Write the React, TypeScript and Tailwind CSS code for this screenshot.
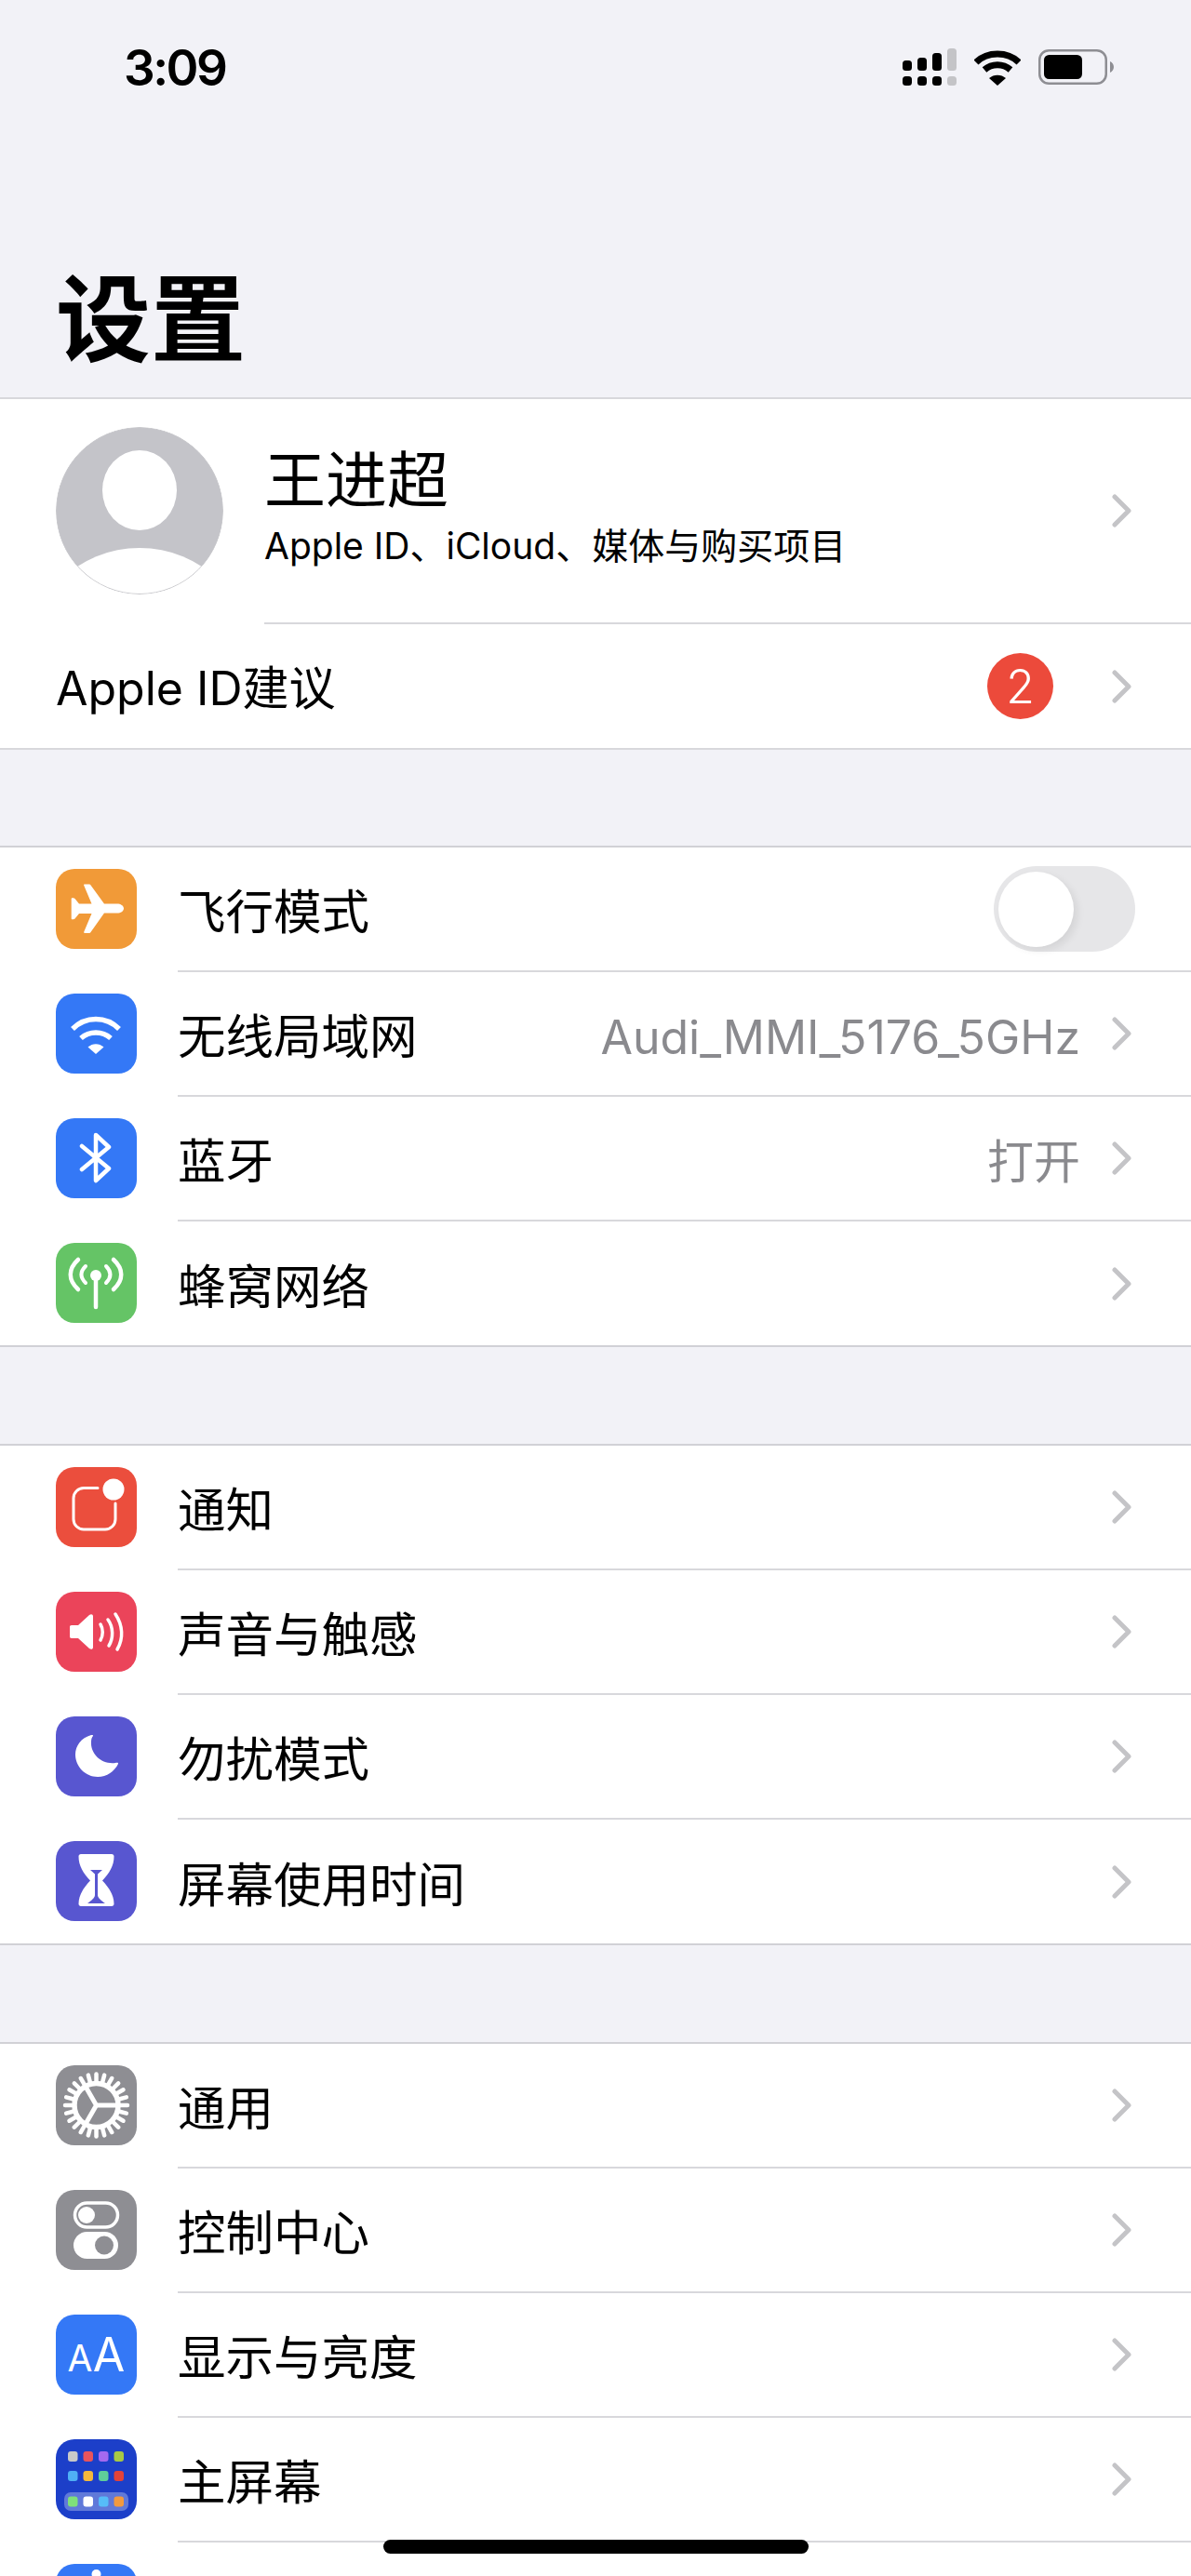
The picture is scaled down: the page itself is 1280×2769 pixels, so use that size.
import type { ReactNode } from "react";

const iconBox = "mb-[2px] flex h-[86px] w-[87px] shrink-0 items-center justify-center rounded-[20px]";

function Chevron() {
  return (
    <svg width="22" height="36" viewBox="0 0 22 36" fill="none" className="shrink-0">
      <path d="M3 3l15 15L3 33" stroke="#c4c4c7" strokeWidth="5" strokeLinecap="round" strokeLinejoin="round" />
    </svg>
  );
}

function Glyph({ children }: { children: ReactNode }) {
  return (
    <svg width="87" height="86" viewBox="0 0 87 86" fill="none">
      {children}
    </svg>
  );
}

const PlaneIcon = () => (
  <Glyph>
    <path
      d="M73 42.5c0-3-3.500-5-7-5H52L37.500 17.500c-.5-.8-1-1-2-1H31c-.8 0-1 .5-.8 1.200L38.500 37.500H25l-4.500-5.500c-.5-.5-1-.8-1.800-.8h-1c-.8 0-1 .5-1 1v21c0 .6.300 1 1 1h1c.8 0 1.300-.3 1.800-.8L25 48h13.500l-8.300 19.800c-.2.7 0 1.200.8 1.200h4.500c1 0 1.500-.2 2-1L52 47.500h14c3.500 0 7-2 7-5z"
      fill="#fff"
    />
  </Glyph>
);

const WifiIcon = () => (
  <Glyph>
    <path d="M18 38c14-14 36-14 50 0" stroke="#fff" strokeWidth="5.500" />
    <path d="M27 48c9-8 23-8 32 0" stroke="#fff" strokeWidth="5.500" />
    <path d="M34.500 57.500c5-4.500 12-4.500 17 0L43 65z" fill="#fff" />
  </Glyph>
);

const BluetoothIcon = () => (
  <Glyph>
    <path
      d="M28 30l29 24-14 13V18l14 13-29 24"
      stroke="#fff"
      strokeWidth="4.500"
      strokeLinecap="round"
      strokeLinejoin="round"
    />
  </Glyph>
);

const CellularIcon = () => (
  <Glyph>
    <circle cx="43" cy="35" r="6" fill="#fff" />
    <path d="M43 36v33" stroke="#fff" strokeWidth="4.500" strokeLinecap="round" />
    <path d="M32 25c-6 6-6 12 0 18M54 25c6 6 6 12 0 18" stroke="#fff" strokeWidth="4" strokeLinecap="round" />
    <path d="M24 18c-11 10-11 22 0 32M62 18c11 10 11 22 0 32" stroke="#fff" strokeWidth="4.500" strokeLinecap="round" />
  </Glyph>
);

const NotifyIcon = () => (
  <Glyph>
    <path
      d="M45 22.500H30a11 11 0 0 0-11 11V56a11 11 0 0 0 11 11h23a11 11 0 0 0 11-11V39"
      stroke="#fff"
      strokeWidth="3"
      strokeLinecap="round"
    />
    <circle cx="62" cy="24" r="11.500" fill="#fff" />
  </Glyph>
);

const SoundIcon = () => (
  <Glyph>
    <path
      d="M17 36h7l12-11c2-1.500 4-.8 4 1.500v33c0 2.300-2 3-4 1.500L24 50h-7c-1.500 0-2-.8-2-2V38c0-1.200.5-2 2-2z"
      fill="#fff"
    />
    <path d="M48 35c3 5 3 12 0 17" stroke="#fff" strokeWidth="3.500" strokeLinecap="round" />
    <path d="M56 30c6 8 6 20 1 28" stroke="#fff" strokeWidth="3.500" strokeLinecap="round" />
    <path d="M64 24c8 12 9 26 2 38" stroke="#fff" strokeWidth="3.500" strokeLinecap="round" />
  </Glyph>
);

const MoonIcon = () => (
  <Glyph>
    <path
      d="M38 20C27 23 21 32 21 41c0 13 11 24 24 24 10 0 18-6 22-14 .4-1-.5-1.500-3-1-14 2-27-9-26-23 0-3 1-5 2-6 .4-1-.8-1.300-2-1z"
      fill="#fff"
    />
  </Glyph>
);

const HourglassIcon = () => (
  <Glyph>
    <path
      d="M27 14h33c1.500 0 2.500 1 2.500 2.500 0 10-5 18-12.500 26 7.500 8 12.500 16 12.500 25 0 1.500-1 2.500-2.500 2.500H27c-1.500 0-2.500-1-2.500-2.500 0-9 5-17 12.500-25-7.500-8-12.500-16-12.500-26C24.500 15 25.500 14 27 14z"
      fill="#fff"
    />
    <path d="M37 31h13l-5 4.500V58c0 3 4 6 8 9H34c4-3 8-6 8-9V35.500z" fill="#5856d0" />
  </Glyph>
);

const GearIcon = () => (
  <Glyph>
    <circle cx="43.500" cy="43" r="23.500" stroke="#fff" strokeWidth="5.500" />
    {Array.from({ length: 24 }, (_, i) => {
      const a = (i * Math.PI) / 12;
      return (
        <line
          key={i}
          x1={43.5 + 24 * Math.cos(a)}
          y1={43 + 24 * Math.sin(a)}
          x2={43.5 + 33.5 * Math.cos(a)}
          y2={43 + 33.5 * Math.sin(a)}
          stroke="#fff"
          strokeWidth="4.500"
          strokeLinecap="round"
        />
      );
    })}
    <path d="M43.500 43H67M43.500 43L32 23M43.500 43L32 63" stroke="#fff" strokeWidth="5" />
  </Glyph>
);

const ControlIcon = () => (
  <Glyph>
    <rect x="20.500" y="14" width="46" height="26" rx="13" stroke="#fff" strokeWidth="3.500" />
    <circle cx="33" cy="27" r="9" fill="#fff" />
    <rect x="19" y="45" width="48" height="29" rx="14.500" fill="#fff" />
    <circle cx="52" cy="59.500" r="10" fill="#8e8e93" />
  </Glyph>
);

const DisplayIcon = () => (
  <Glyph>
    <text x="26" y="61" textAnchor="middle" fill="#fff" fontSize="39" fontFamily="Inter, sans-serif" fontWeight="400">
      A
    </text>
    <text x="57" y="61" textAnchor="middle" fill="#fff" fontSize="50" fontFamily="Inter, sans-serif" fontWeight="400">
      A
    </text>
  </Glyph>
);

const homeDots = [
  ["#c9c9c9", "#e9545c", "#a56af0", "#a8c945"],
  ["#4fb0f5", "#f5b93c", "#5fcf9a", "#e2433a"],
  ["#7fe07a", "#ffffff", "#56bcf8", "#f29a3f"],
];

const HomeIcon = () => (
  <Glyph>
    <rect x="9" y="57" width="69" height="20" rx="7" fill="#fff" fillOpacity="0.3" />
    {homeDots.map((row, r) =>
      row.map((c, i) => (
        <rect key={`${r}-${i}`} x={13 + i * 16.5} y={[13, 34, 61.5][r]} width="10.500" height="11" rx="3" fill={c} />
      )),
    )}
  </Glyph>
);

const AccessIcon = () => (
  <Glyph>
    <circle cx="43.500" cy="11" r="5" fill="#fff" />
  </Glyph>
);

type Item = { label: string; bg: string; icon: ReactNode; value?: string; toggle?: boolean };

const groups: Item[][] = [
  [
    { label: "飞行模式", bg: "bg-[#f19a38]", icon: <PlaneIcon />, toggle: true },
    { label: "无线局域网", bg: "bg-[#3478f6]", icon: <WifiIcon />, value: "Audi_MMI_5176_5GHz" },
    { label: "蓝牙", bg: "bg-[#3478f6]", icon: <BluetoothIcon />, value: "打开" },
    { label: "蜂窝网络", bg: "bg-[#65c466]", icon: <CellularIcon /> },
  ],
  [
    { label: "通知", bg: "bg-[#eb4e3d]", icon: <NotifyIcon /> },
    { label: "声音与触感", bg: "bg-[#eb445a]", icon: <SoundIcon /> },
    { label: "勿扰模式", bg: "bg-[#5856d0]", icon: <MoonIcon /> },
    { label: "屏幕使用时间", bg: "bg-[#5856d0]", icon: <HourglassIcon /> },
  ],
];

// the fifth row is cut by the bottom of the window, only its icon shows
const lastGroup: Item[] = [
  { label: "通用", bg: "bg-[#8e8e93]", icon: <GearIcon /> },
  { label: "控制中心", bg: "bg-[#8e8e93]", icon: <ControlIcon /> },
  { label: "显示与亮度", bg: "bg-[#3478f6]", icon: <DisplayIcon /> },
  { label: "主屏幕", bg: "bg-[#1c3fc9]", icon: <HomeIcon /> },
  { label: "", bg: "bg-[#3478f6]", icon: <AccessIcon /> },
];

function Toggle() {
  return (
    <div className="relative h-[92px] w-[152px] shrink-0 rounded-full bg-[#e6e6e8]">
      <div className="absolute left-[5px] top-[6px] h-[81px] w-[81px] rounded-full bg-white shadow-[4px_4px_8px_rgba(0,0,0,0.08)]" />
    </div>
  );
}

function Row({ item, last }: { item: Item; last: boolean }) {
  return (
    <div className={`flex items-center pl-[60px] ${last ? "h-[133px]" : "h-[134px]"}`}>
      <div className={`${iconBox} ${item.bg}`}>{item.icon}</div>
      <div
        className={`ml-[44px] flex h-full min-w-0 flex-1 items-center justify-between pr-[63px] ${
          last ? "" : "border-b-2 border-[#d8d8dc]"
        }`}
      >
        <span className="pt-[8px] text-[51.5px] leading-none text-black">{item.label}</span>
        <div className="flex items-center">
          {item.value && (
            <span className="mr-[34px] pt-[8px] text-[50px] leading-none text-[#8a8a8e]">{item.value}</span>
          )}
          {item.toggle ? (
            <div className="-mr-[3px]">
              <Toggle />
            </div>
          ) : (
            <Chevron />
          )}
        </div>
      </div>
    </div>
  );
}

function Group({ items, open }: { items: Item[]; open?: boolean }) {
  return (
    <div className={`border-t-2 border-[#d1d1d6] bg-white ${open ? "" : "border-b-2"}`}>
      {items.map((item, i) => (
        <Row key={i} item={item} last={!open && i === items.length - 1} />
      ))}
    </div>
  );
}

function StatusIcons() {
  return (
    <div className="flex items-start">
      <svg width="58" height="44" viewBox="0 0 58 44" className="mt-[52px]">
        <rect x="0" y="13" width="10" height="11" rx="3.500" />
        <rect x="16" y="10" width="10" height="14" rx="3.500" />
        <rect x="32" y="5" width="10" height="19" rx="3.500" />
        <rect x="48" y="0" width="10" height="24" rx="3.500" fill="#c4c4c7" />
        <rect x="0" y="30" width="10" height="10" rx="3.500" />
        <rect x="16" y="30" width="10" height="10" rx="3.500" />
        <rect x="32" y="30" width="10" height="10" rx="3.500" />
        <rect x="48" y="30" width="10" height="10" rx="3.500" fill="#c4c4c7" />
      </svg>
      <svg width="50" height="38" viewBox="0 0 50 38" fill="none" className="ml-[19px] mt-[54px]">
        <path d="M2 13C14 1 36 1 48 13" stroke="#000" strokeWidth="7" />
        <path d="M11 21c8-7 20-7 28 0" stroke="#000" strokeWidth="7" />
        <path d="M16 30c5-4.500 13-4.500 18 0L25 38z" fill="#000" />
      </svg>
      <svg width="82" height="38" viewBox="0 0 82 38" fill="none" className="ml-[19px] mt-[53px]">
        <rect x="1.250" y="1.250" width="71.500" height="35.500" rx="10" stroke="#8e8e93" strokeWidth="2.500" />
        <rect x="6" y="6" width="41" height="26" rx="5.500" fill="#000" />
        <path d="M77 13c2.500 1 4 3.500 4 6s-1.500 5-4 6z" fill="#8e8e93" />
      </svg>
    </div>
  );
}

export default function App() {
  return (
    <div className="relative h-[2769px] w-full overflow-hidden bg-[#f2f2f7] font-['Inter','Noto_Sans_CJK_SC',sans-serif]">
      <div className="h-[427px]">
        <div className="flex h-[163px] items-start justify-between pl-[133px] pr-[82px]">
          <span className="mt-[43px] text-[53px] font-semibold leading-[60px] tracking-[-2.5px] text-black">3:09</span>
          <StatusIcons />
        </div>
        <h1 className="mt-[116px] pl-[60px] text-[102px] font-bold leading-[130px] text-black">设置</h1>
      </div>

      <div className="border-y-2 border-[#d8d8dc] bg-white">
        <div className="flex h-[242px] pl-[60px]">
          <div className="relative mt-[30px] h-[180px] w-[180px] shrink-0 overflow-hidden rounded-full">
            <svg width="180" height="180" viewBox="0 0 180 180">
              <circle cx="90" cy="90" r="89.500" fill="#c4c4c9" />
              <ellipse cx="90" cy="68" rx="40" ry="43" fill="#fff" />
              <circle cx="90" cy="252" r="122" fill="#fff" />
              <circle cx="90" cy="90" r="89.500" fill="none" stroke="#c8c8cc" strokeWidth="1" />
            </svg>
          </div>
          <div className="ml-[44px] flex flex-1 items-center justify-between border-b-2 border-[#d8d8dc] pr-[63px]">
            <div className="self-start pt-[43px]">
              <div className="text-[66px] leading-[88px] text-black">王进超</div>
              <div className="mt-[5px] text-[39px] leading-[44px] text-black">Apple ID、iCloud、媒体与购买项目</div>
            </div>
            <Chevron />
          </div>
        </div>
        <div className="flex h-[133px] items-center justify-between pl-[60px] pr-[63px]">
          <span className="pt-[4px] text-[50px] leading-none text-black">Apple ID建议</span>
          <div className="flex items-center">
            <div className="mr-[63px] flex h-[71px] w-[71px] items-center justify-center rounded-full bg-[#ec4a3b] text-[50px] font-light leading-none text-white">
              2
            </div>
            <Chevron />
          </div>
        </div>
      </div>

      <div className="mt-[103px] flex flex-col gap-[104px]">
        {groups.map((g) => (
          <Group key={g[0].label} items={g} />
        ))}
        <Group items={lastGroup} open />
      </div>

      <div className="absolute bottom-[24px] left-[412px] h-[15px] w-[457px] rounded-full bg-black" />
    </div>
  );
}
